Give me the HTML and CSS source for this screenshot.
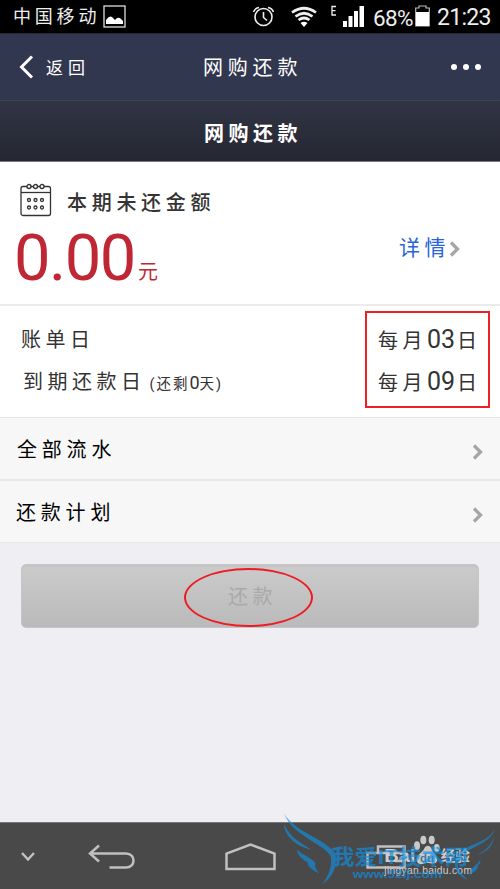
FILE: index.html
```html
<!DOCTYPE html>
<html lang="zh-CN">
<head>
<meta charset="utf-8">
<title>网购还款</title>
<link rel="stylesheet" href="styles.css">
</head>
<body>
<div class="screen">
  <div class="status">
    <span class="carrier">中国移动</span>
    <svg class="gallery" width="23" height="23" viewBox="0 0 23 23"><rect x="1" y="1" width="21" height="21" fill="none" stroke="#ddd" stroke-width="1.3"/><path d="M3 19V15Q6 10 9 12L12 15Q15 11 18 14L20 16V19Z" fill="#fff"/></svg>
    <svg class="signals" width="117" height="28" viewBox="252 3 117 28" fill="none" stroke="#eee">
      <circle cx="263.5" cy="17" r="8.5" stroke-width="1.6"/><path d="M263.5 12V17.5L267 20.5M253.5 12Q255 8 259 7.500M273.500 12Q272 8 268 7.500" stroke-width="1.6"/>
      <path d="M292 12.500Q304 4 316 12.500M295.500 16.500Q304 10 312.500 16.500M298.500 20Q304 16 309.500 20" stroke-width="2.700"/><path d="M300.500 23Q304 20.500 307.500 23L304 27Z" fill="#fff" stroke="none"/>
      <path d="M336 6.500H332V15H336M332 10.700H335.500" stroke-width="1.3"/>
      <path d="M343 21h4v6h-4zM348.500 16h4v11h-4zM354 11h4v16h-4zM359.500 6h4.500v21h-4.500z" fill="#fff" stroke="none"/>
    </svg>
    <span class="percent">68%</span>
    <svg class="battery" width="15" height="22" viewBox="0 0 15 22"><path d="M.7 21V3H4V1H11V3H14.300V21Z" fill="none" stroke="#bbb" stroke-width="1.200"/><path d="M1 7H14V21H1Z" fill="#fff"/></svg>
    <span class="clock">21:23</span>
  </div>
  <header class="nav">
    <div class="back"><svg width="15" height="24" viewBox="0 0 15 24"><path d="M13 1.500L2.500 12L13 22.500" fill="none" stroke="#fff" stroke-width="3"/></svg><span>返回</span></div>
    <div class="nav-title">网购还款</div>
    <div class="dots"><i></i><i></i><i></i></div>
  </header>
  <h1 class="title">网购还款</h1>
  <section class="amount">
    <div class="amount-head">
      <svg width="32" height="34" viewBox="0 0 32 34" fill="none" stroke="#333" stroke-width="1.300"><rect x="1" y="3.500" width="29.500" height="29" rx="2"/><path d="M1 9.500H30.500"/><g fill="#fff"><circle cx="9" cy="3.500" r="2"/><circle cx="15.500" cy="3.500" r="2"/><circle cx="22" cy="3.500" r="2"/><circle cx="9" cy="17" r="1.500"/><circle cx="15.500" cy="17" r="1.500"/><circle cx="22" cy="17" r="1.500"/><circle cx="9" cy="24.500" r="1.500"/><circle cx="15.500" cy="24.500" r="1.500"/><circle cx="22" cy="24.500" r="1.500"/></g></svg>
      <span>本期未还金额</span>
    </div>
    <div class="amount-row">
      <div class="money">0.00</div><div class="unit">元</div>
      <div class="detail">详情</div>
      <svg class="chev" width="11" height="16" viewBox="0 0 11 16"><path d="M2 1.500L8.500 8L2 14.500"/></svg>
    </div>
  </section>
  <section class="dates">
    <div class="labels">
      <div class="bill">账单日</div>
      <div class="due">到期还款日<small>(还剩<b>0</b>天)</small></div>
    </div>
    <div class="marked"><div>每月<b>03</b>日</div><div>每月<b>09</b>日</div></div>
  </section>
  <div class="row"><span>全部流水</span><svg class="chev" width="11" height="16" viewBox="0 0 11 16"><path d="M2 1.500L8.500 8L2 14.500"/></svg></div>
  <div class="row plan"><span>还款计划</span><svg class="chev" width="11" height="16" viewBox="0 0 11 16"><path d="M2 1.500L8.500 8L2 14.500"/></svg></div>
  <main class="action">
    <div class="pay"><div class="ring">还款</div></div>
  </main>
  <footer class="keys">
    <svg class="k-down" width="14" height="10" viewBox="0 0 14 10"><path d="M1 1L7 7.500L13 1" stroke-width="2.500"/></svg>
    <svg class="k-back" width="48" height="26" viewBox="0 0 48 26"><path d="M11 1.500L2 9.500L11 17.500M2 9.500H38C48 9.500 48 23.500 38 23.500H21.500" stroke-width="2.500"/></svg>
    <svg class="k-home" width="51" height="28" viewBox="0 0 51 28"><path d="M1.500 26V10.500L25.500 1.500L49.500 10.500V26Z" stroke-width="2.500"/></svg>
    <svg class="k-recent" width="40" height="24" viewBox="0 0 40 24"><path d="M12 7V1.500H38.500V16H29M1.500 8H38.500V22.500H1.500Z" stroke-width="2.500"/></svg>
  </footer>
  <div class="overlay">
    <svg width="230" height="84" viewBox="0 0 690 252">
      <g fill="#c9c9c9"><ellipse cx="441" cy="122" rx="9" ry="13"/><ellipse cx="460" cy="105" rx="9" ry="13"/><ellipse cx="485" cy="105" rx="9" ry="13"/><ellipse cx="500" cy="129" rx="9" ry="12"/><path d="M440 168C438 148 456 145 462 132C469 117 482 122 485 133C491 147 504 152 501 168C497 182 478 172 469 174C458 179 444 180 440 168Z"/></g>
      <g class="bd"><text x="343" y="172" font-size="57" textLength="94" lengthAdjust="spacingAndGlyphs">Bai</text><text x="450" y="170" font-size="34" fill="#38799f">du</text><text x="512" y="168" font-size="44" textLength="88">经验</text><text x="343" y="208" font-size="31" font-weight="400" textLength="263">jingyan.baidu.com</text></g>
      <g fill="#118ee0" opacity=".68"><path d="M42 25C72 82 173 104 197 148C202 185 188 218 157 237C180 207 187 179 182 153C155 112 67 93 42 25Z"/><path d="M42 57C64 103 93 112 121 133C78 124 42 91 42 57Z"/><path d="M80 133C96 151 127 158 137 176C131 184 140 194 148 206C124 194 112 183 113 172C93 162 83 149 80 133Z"/><path d="M674 73C664 113 604 125 568 154C553 181 570 207 594 224C557 213 548 177 560 153C592 113 650 118 674 73Z"/><path d="M671 96C663 126 641 141 617 151C645 144 669 127 671 96Z"/><path d="M631 164C622 179 603 187 595 211C613 201 626 194 623 181Q632 176 631 164Z"/>
      <text class="wm" x="184" y="177" font-size="63" textLength="410" lengthAdjust="spacingAndGlyphs">我爱IT技术网</text><text class="wm" x="248" y="218" font-size="34" textLength="268" lengthAdjust="spacingAndGlyphs">www.52ij.com</text></g>
    </svg>
  </div>
</div>
</body>
</html>
```
FILE: styles.css
```css
* { box-sizing: border-box; }
body { margin: 0; font-family: Roboto, "Noto Sans CJK SC", sans-serif; color: #333; }
.screen { position: relative; width: 500px; height: 889px; overflow: hidden; display: flex; flex-direction: column; background: #efeef3; font-size: 20px; letter-spacing: 4.5px; }
.status { height: 34px; flex: none; background: #000; color: #eee; display: flex; align-items: center; padding-left: 13px; border-bottom: 1px solid #252938; letter-spacing: 0; white-space: nowrap; }
.carrier { width: 90px; font-size: 18px; letter-spacing: 3.8px; line-height: 30px; }
.signals { margin-left: 126px; }
.percent { margin-left: 4px; width: 42px; font-size: 22.5px; line-height: 34px; letter-spacing: -.6px; padding-top: 2px; }
.battery { flex: none; margin-top: -2px; }
.clock { margin-left: 7px; font-size: 23px; letter-spacing: -.7px; padding-top: 2px; }
.nav { height: 67px; flex: none; display: grid; grid-template-columns: 203px 1fr 49px; align-items: center; background: #323750; color: #fff; border-bottom: 1px solid #42434d; padding-bottom: 1px; }
.back { display: flex; align-items: center; gap: 12px; padding-left: 19px; font-size: 17px; letter-spacing: 5px; }
.dots { display: flex; gap: 6px; }
.nav-title { white-space: nowrap; letter-spacing: 4.8px; }
.dots i { width: 6px; height: 6px; border-radius: 50%; background: #fff; }
.title { margin: 0; height: 61px; flex: none; line-height: 67px; padding-left: 204px; background: linear-gradient(#313445, #252731); color: #fff; font-size: 20px; font-weight: 700; border-bottom: 1px solid #777983; }
.amount { height: 144px; flex: none; background: #fff; border-bottom: 2px solid #ebebeb; padding: 20px 39px 0 20px; }
.amount-head { height: 40px; display: flex; align-items: center; gap: 15px; font-weight: 500; letter-spacing: 4.7px; }
.amount-head svg { margin-bottom: 5px; }
.amount-head span { margin-bottom: 2px; }
.amount-row { display: flex; height: 70px; align-items: center; margin-left: -6px; color: #bf2735; }
.money { font-size: 65px; letter-spacing: -1.5px; line-height: 70px; width: 124px; padding-top: 2px; }
.unit { font-size: 20px; padding-top: 27px; }
.detail { margin-left: auto; margin-bottom: 23px; color: #2864d8; font-size: 21px; }
.chev { fill: none; stroke: #a6a6a6; stroke-width: 3.300; }
.amount-row .chev { margin-bottom: 16px; margin-right: 1px; margin-left: -1px; }
.dates { height: 112px; flex: none; background: #fff; border-bottom: 1px solid #e3e3e3; display: flex; justify-content: space-between; padding: 5px 10px 0 21px; }
.labels { padding-top: 8px; line-height: 42px; white-space: nowrap; }
.due { padding-left: 2px; }
.due small { font-size: 14.500px; letter-spacing: 2px; margin-left: 4px; }
.due b { font-weight: 400; font-size: 18px; letter-spacing: 0; }
.marked { width: 125px; height: 97px; border: 2px solid #ed2024; padding: 6px 0 0 11px; line-height: 42px; white-space: nowrap; }
.marked div { height: 42px; }
.marked b { font-weight: 400; font-size: 25px; letter-spacing: 0; margin-right: 2px; }
.row { height: 63px; flex: none; display: flex; align-items: center; justify-content: space-between; background: #f7f7f7; border-bottom: 2px solid #e8e8e8; padding: 0 17px 0 17px; color: #000; letter-spacing: 4.8px; }
.row span { margin-bottom: 1px; }
.row .chev { margin-top: 6px; }
.plan { border-bottom-width: 1px; padding-left: 16px; height: 62px; }
.action { flex: 1; padding: 21px 21px 0; }
.pay { height: 64px; border: 1px solid #c5c5c8; border-radius: 5px; background: linear-gradient(#cbcbcb, #bababa); box-shadow: inset 0 2px #c5c5c5; display: flex; padding: 3px 0 0 162px; }
.ring { width: 129px; height: 59px; border: 2px solid #ed1c24; border-radius: 50%; color: #a9a9a9; padding-left: 8px; text-align: center; line-height: 54px; }
.keys { height: 67px; flex: none; display: flex; align-items: center; background: #49494a; border-top: 1px solid #777; padding: 1px 0 0 21px; }
.keys svg { fill: none; stroke: #c1bfc0; }
.k-back { margin-left: 53px; }
.k-home { margin-left: 89px; }
.k-recent { margin-left: 90px; }
.overlay { position: absolute; left: 270px; top: 805px; letter-spacing: 0; }
.overlay svg { display: block; }
.bd { fill: #cecece; font-family: "Liberation Sans", "Noto Sans CJK SC", sans-serif; font-weight: 700; }
.wm { font-family: "Liberation Sans", "Noto Sans CJK SC", sans-serif; font-weight: 700; }
```
